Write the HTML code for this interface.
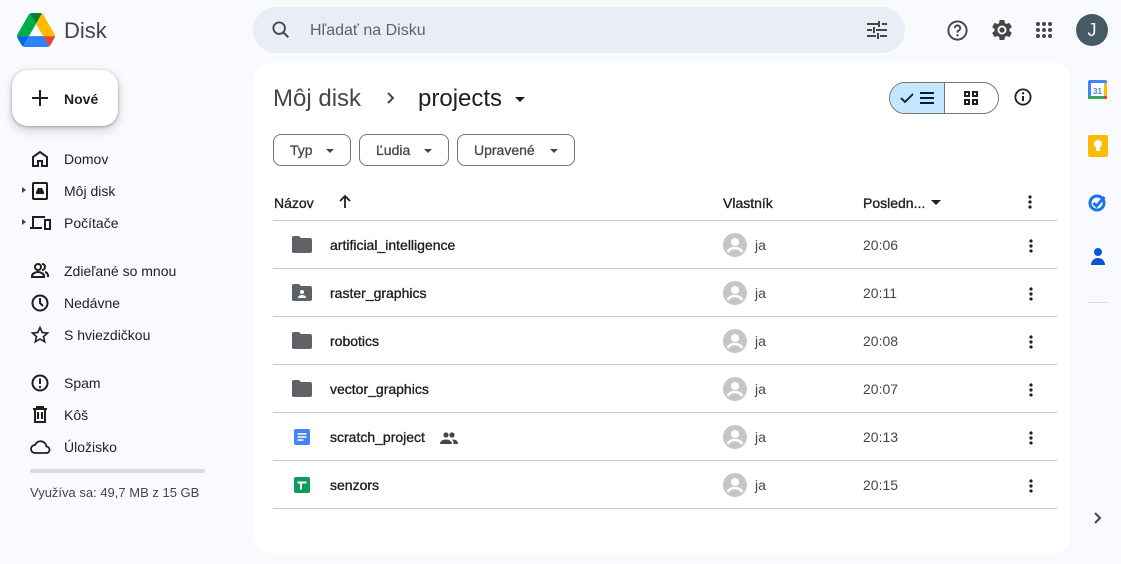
<!DOCTYPE html>
<html><head><meta charset="utf-8"><style>
*{box-sizing:border-box;margin:0;padding:0}
body{width:1121px;height:564px;background:#f8fafd;font-family:"Liberation Sans",sans-serif;color:#1f1f1f;position:relative;overflow:hidden}
.a{position:absolute}
.m{-webkit-text-stroke:0.35px currentColor}
.nav{position:absolute;left:30px;font-size:14px;color:#1f1f1f}
.nav span{position:absolute;left:34px;top:0;white-space:nowrap}
.nav svg{position:absolute;left:0;top:-2px}
.row{position:absolute;left:273px;width:784px;height:48px;border-bottom:1px solid #c7c7c7}
.row .n{position:absolute;left:57px;top:16px;font-size:14px;line-height:16px;color:#1f1f1f;-webkit-text-stroke:0.35px #1f1f1f}
.row .ic{position:absolute;left:18px;top:14px}
.row .av{position:absolute;left:450px;top:12px}
.row .ja{position:absolute;left:482px;top:16px;font-size:14px;line-height:16px;color:#444746}
.row .t{position:absolute;left:590px;top:16px;font-size:14px;line-height:16px;color:#444746}
.row .d{position:absolute;left:756px;top:18px}
.chip{position:absolute;top:134px;height:32px;border:1px solid #747775;border-radius:8px;font-size:14px;line-height:16px;color:#444746;padding:7px 0 0 16px;-webkit-text-stroke:0.3px #444746}
.chip:after{content:"";position:absolute;right:16px;top:14px;border:4px solid transparent;border-top-color:#444746;border-bottom:0}
</style></head><body>
<svg class="a" style="left:17px;top:13px" width="38" height="34" viewBox="0 0 87.3 78"><path d="m6.6 66.85 3.85 6.65c.8 1.4 1.950 2.5 3.3 3.3l13.75-23.8h-27.5c0 1.55.4 3.1 1.2 4.5z" fill="#0066da"/><path d="m43.65 25-13.750-23.8c-1.35.8-2.5 1.9-3.3 3.3l-25.4 44a9.06 9.06 0 0 0 -1.2 4.5h27.5z" fill="#00ac47"/><path d="m73.55 76.8c1.35-.8 2.5-1.9 3.3-3.3l1.6-2.75 7.65-13.25c.8-1.4 1.2-2.95 1.2-4.5h-27.502l5.852 11.5z" fill="#ea4335"/><path d="m43.65 25 13.75-23.8c-1.35-.8-2.9-1.2-4.5-1.2h-18.5c-1.6 0-3.15.45-4.5 1.2z" fill="#00832d"/><path d="m59.8 53h-32.3l-13.75 23.8c1.35.8 2.9 1.2 4.5 1.2h50.8c1.6 0 3.15-.45 4.5-1.2z" fill="#2684fc"/><path d="m73.4 26.5-12.7-22c-.8-1.4-1.95-2.5-3.3-3.3l-13.75 23.8 16.15 28h27.45c0-1.55-.4-3.1-1.2-4.5z" fill="#ffba00"/></svg>
<div class="a" style="left:64px;top:18px;font-size:22px;color:#444746">Disk</div>
<div class="a" style="left:253px;top:7px;width:652px;height:46px;background:#e9eef6;border-radius:24px"></div>
<svg class="a" style="left:270px;top:19px" width="22" height="22" viewBox="0 0 24 24"><circle cx="10" cy="10" r="6.3" fill="none" stroke="#444746" stroke-width="2"/><path d="M14.5 14.5 20 20" stroke="#444746" stroke-width="2.2"/></svg>
<div class="a" style="left:310px;top:22px;font-size:16px;color:#5f6368">Hľadať na Disku</div>
<svg class="a" style="left:866px;top:20px" width="22" height="20" viewBox="0 0 22 20"><path d="M1 4h11M16 4h5M1 10h5M10 10h11M1 16h9M14 16h7M13 1v6M8 7v6M12 13v6" stroke="#444746" stroke-width="2" fill="none"/></svg>
<svg class="a" style="left:946px;top:19px" width="23" height="23" viewBox="0 0 24 24"><circle cx="12" cy="12" r="9.5" fill="none" stroke="#444746" stroke-width="2"/><path d="M9.2 9.5a2.8 2.8 0 1 1 4 2.5c-1 .5-1.2 1.2-1.2 2.2" fill="none" stroke="#444746" stroke-width="2"/><circle cx="12" cy="17" r="1.2" fill="#444746"/></svg>
<svg class="a" style="left:990px;top:18px" width="24" height="24" viewBox="0 0 24 24"><path fill="#444746" d="M19.43 12.98c.04-.32.07-.64.07-.98s-.03-.66-.07-.98l2.11-1.65c.19-.15.24-.42.12-.64l-2-3.46c-.12-.22-.39-.3-.61-.22l-2.49 1c-.52-.4-1.08-.73-1.690-.98l-.38-2.65A.49.49 0 0 0 14 2h-4c-.25 0-.46.18-.49.42l-.38 2.65c-.61.25-1.17.59-1.69.98l-2.49-1c-.23-.09-.49 0-.61.22l-2 3.46c-.13.22-.07.49.12.64l2.11 1.65c-.04.32-.07.65-.07.98s.03.66.07.98l-2.11 1.65c-.19.15-.24.42-.12.64l2 3.46c.12.22.39.3.61.22l2.49-1c.52.4 1.08.73 1.69.98l.38 2.65c.03.24.24.42.49.42h4c.25 0 .46-.18.49-.42l.38-2.65c.61-.25 1.17-.59 1.69-.98l2.49 1c.23.09.49 0 .61-.22l2-3.46c.12-.22.07-.49-.12-.64l-2.11-1.65zM12 16.5a4.5 4.5 0 1 1 0-9 4.5 4.5 0 0 1 0 9z"/><circle cx="12" cy="12" r="2.6" fill="#444746"/></svg>
<svg class="a" style="left:1035px;top:21px" width="18" height="18" viewBox="0 0 18 18" fill="#444746"><circle cx="3" cy="3" r="2"/><circle cx="9" cy="3" r="2"/><circle cx="15" cy="3" r="2"/><circle cx="3" cy="9" r="2"/><circle cx="9" cy="9" r="2"/><circle cx="15" cy="9" r="2"/><circle cx="3" cy="15" r="2"/><circle cx="9" cy="15" r="2"/><circle cx="15" cy="15" r="2"/></svg>
<div class="a" style="left:1076px;top:14px;width:32px;height:32px;border-radius:50%;background:#455a64;color:#fff;font-size:18px;text-align:center;line-height:32px">J</div>
<div class="a" style="left:12px;top:70px;width:106px;height:56px;background:#fff;border-radius:16px;box-shadow:0 1px 3px rgba(0,0,0,.3),0 4px 8px 3px rgba(0,0,0,.1)"></div>
<svg class="a" style="left:31px;top:89px" width="18" height="18" viewBox="0 0 18 18"><path d="M9 1v16M1 9h16" stroke="#1f1f1f" stroke-width="2"/></svg>
<div class="a" style="left:64px;top:91px;font-size:14px;font-weight:bold">Nové</div>
<div class="nav" style="top:151px"><svg width="20" height="20" viewBox="0 0 20 20"><path d="M3 17V8l7-5 7 5v9h-5v-5H8v5z" fill="none" stroke="#1f1f1f" stroke-width="2"/></svg><span>Domov</span></div>
<div class="a" style="left:22px;top:187px;border:3px solid transparent;border-left:4px solid #444;border-right:0"></div>
<div class="nav" style="top:183px"><svg width="20" height="20" viewBox="0 0 20 20"><rect x="3" y="2" width="14" height="16" rx="1" fill="none" stroke="#1f1f1f" stroke-width="2"/><path d="M6 13h8v-2l-2-4h-4l-2 4z" fill="#1f1f1f"/></svg><span>Môj disk</span></div>
<div class="a" style="left:22px;top:219px;border:3px solid transparent;border-left:4px solid #444;border-right:0"></div>
<div class="nav" style="top:215px"><svg width="22" height="20" viewBox="0 0 22 20"><path d="M3 14V4h12M0 15h12" fill="none" stroke="#1f1f1f" stroke-width="2"/><rect x="15" y="7" width="5" height="9" fill="none" stroke="#1f1f1f" stroke-width="2"/></svg><span>Počítače</span></div>
<div class="nav" style="top:263px"><svg width="20" height="20" viewBox="0 0 20 20"><circle cx="8" cy="6" r="3" fill="none" stroke="#1f1f1f" stroke-width="2"/><path d="M2 16v-1c0-2 3-4 6-4s6 2 6 4v1z" fill="none" stroke="#1f1f1f" stroke-width="2"/><path d="M12 3a3 3 0 0 1 0 6M15 11c2 .5 3 2 3 4v1" fill="none" stroke="#1f1f1f" stroke-width="2"/></svg><span>Zdieľané so mnou</span></div>
<div class="nav" style="top:295px"><svg width="20" height="20" viewBox="0 0 20 20"><circle cx="10" cy="10" r="7.5" fill="none" stroke="#1f1f1f" stroke-width="2"/><path d="M10 5v5l3 3" fill="none" stroke="#1f1f1f" stroke-width="2"/></svg><span>Nedávne</span></div>
<div class="nav" style="top:327px"><svg width="20" height="20" viewBox="0 0 20 20"><path d="M10 2.5l2.2 5 5.3.5-4 3.6 1.2 5.2L10 14l-4.7 2.8 1.2-5.2-4-3.6 5.3-.5z" fill="none" stroke="#1f1f1f" stroke-width="1.6"/></svg><span>S hviezdičkou</span></div>
<div class="nav" style="top:375px"><svg width="20" height="20" viewBox="0 0 20 20"><circle cx="10" cy="10" r="7.5" fill="none" stroke="#1f1f1f" stroke-width="2"/><path d="M10 5.5v5.5" stroke="#1f1f1f" stroke-width="2"/><circle cx="10" cy="14" r="1.2" fill="#1f1f1f"/></svg><span>Spam</span></div>
<div class="nav" style="top:407px"><svg width="20" height="20" viewBox="0 0 20 20"><path d="M3 4h14M5 4v13h10V4M8 7v7M12 7v7M7 4V2h6v2" fill="none" stroke="#1f1f1f" stroke-width="2"/></svg><span>Kôš</span></div>
<div class="nav" style="top:439px"><svg width="22" height="20" viewBox="0 0 22 20"><path d="M5 16a4 4 0 0 1 0-8 6 6 0 0 1 11.5 1.5A3.3 3.3 0 0 1 17 16z" fill="none" stroke="#1f1f1f" stroke-width="1.8"/></svg><span>Úložisko</span></div>
<div class="a" style="left:30px;top:469px;width:175px;height:4px;background:#dadce0;border-radius:2px"></div>
<div class="a" style="left:30px;top:485px;font-size:13px;color:#444746">Využíva sa: 49,7 MB z 15 GB</div>
<div class="a" style="left:253px;top:63px;width:817px;height:490px;background:#fff;border-radius:16px"></div>
<div class="a" style="left:273px;top:85px;font-size:24px;color:#444746">Môj disk</div>
<svg class="a" style="left:383px;top:90px" width="16" height="16" viewBox="0 0 16 16"><path d="M5 3l5 5-5 5" fill="none" stroke="#444746" stroke-width="2"/></svg>
<div class="a" style="left:418px;top:85px;font-size:24px;color:#1f1f1f">projects</div>
<div class="a" style="left:515px;top:97px;border:5px solid transparent;border-top-color:#1f1f1f;border-bottom:0"></div>
<div class="a" style="left:889px;top:82px;width:110px;height:32px;border:1px solid #747775;border-radius:16px;overflow:hidden"><div style="position:absolute;left:0;top:0;width:55px;height:32px;background:#c2e7ff;border-right:1px solid #747775"></div></div>
<svg class="a" style="left:899px;top:90px" width="38" height="16" viewBox="0 0 38 16"><path d="M2 8l4 4 8-8" fill="none" stroke="#001d35" stroke-width="1.8"/><path d="M21 3h14M21 8h14M21 13h14" stroke="#001d35" stroke-width="2"/></svg>
<svg class="a" style="left:963px;top:90px" width="16" height="16" viewBox="0 0 16 16" fill="none" stroke="#1f1f1f" stroke-width="2"><rect x="2" y="2" width="4" height="4"/><rect x="10" y="2" width="4" height="4"/><rect x="2" y="10" width="4" height="4"/><rect x="10" y="10" width="4" height="4"/></svg>
<svg class="a" style="left:1013px;top:87px" width="20" height="20" viewBox="0 0 20 20"><circle cx="10" cy="10" r="7.6" fill="none" stroke="#1f1f1f" stroke-width="1.8"/><path d="M10 9v5" stroke="#1f1f1f" stroke-width="2"/><circle cx="10" cy="6.3" r="1.2" fill="#1f1f1f"/></svg>
<div class="chip" style="left:273px;width:78px">Typ</div>
<div class="chip" style="left:359px;width:90px">Ľudia</div>
<div class="chip" style="left:457px;width:118px">Upravené</div>
<div class="a m" style="left:274px;top:195px;font-size:14px">Názov</div>
<svg class="a" style="left:337px;top:194px" width="16" height="16" viewBox="0 0 16 16"><path d="M8 14V2M3 7l5-5 5 5" fill="none" stroke="#1f1f1f" stroke-width="1.8"/></svg>
<div class="a m" style="left:723px;top:195px;font-size:14px">Vlastník</div>
<div class="a m" style="left:863px;top:195px;font-size:14px">Posledn...</div>
<div class="a" style="left:931px;top:200px;border:5px solid transparent;border-top-color:#1f1f1f;border-bottom:0"></div>
<svg class="a" style="left:1028px;top:195px" width="4" height="14" viewBox="0 0 4 14" fill="#1f1f1f"><circle cx="2" cy="2" r="1.6"/><circle cx="2" cy="7" r="1.6"/><circle cx="2" cy="12" r="1.6"/></svg>
<div class="a" style="left:273px;top:220px;width:784px;height:1px;background:#c7c7c7"></div>
<div class="row" style="top:221px"><svg class="ic" width="22" height="20" viewBox="0 0 22 20"><path d="M1 3a2 2 0 0 1 2-2h5l2 2h9a2 2 0 0 1 2 2v11a2 2 0 0 1-2 2H3a2 2 0 0 1-2-2z" fill="#5f6368"/></svg><div class="n">artificial_intelligence</div><svg class="av" width="24" height="24" viewBox="0 0 24 24"><circle cx="12" cy="12" r="12" fill="#c4c7c5"/><circle cx="12" cy="9" r="4" fill="#fff"/><path d="M4.5 19c2-3 4.5-4 7.5-4s5.5 1 7.5 4" fill="none" stroke="#fff" stroke-width="2.5"/></svg><div class="ja">ja</div><div class="t">20:06</div><svg class="d" width="4" height="14" viewBox="0 0 4 14" fill="#1f1f1f"><circle cx="2" cy="2" r="1.6"/><circle cx="2" cy="7" r="1.6"/><circle cx="2" cy="12" r="1.6"/></svg></div>
<div class="row" style="top:269px"><svg class="ic" width="22" height="20" viewBox="0 0 22 20"><path d="M1 3a2 2 0 0 1 2-2h5l2 2h9a2 2 0 0 1 2 2v11a2 2 0 0 1-2 2H3a2 2 0 0 1-2-2z" fill="#5f6368"/><circle cx="11" cy="9" r="2" fill="#fff"/><path d="M7 15c0-2 2-3 4-3s4 1 4 3z" fill="#fff"/></svg><div class="n">raster_graphics</div><svg class="av" width="24" height="24" viewBox="0 0 24 24"><circle cx="12" cy="12" r="12" fill="#c4c7c5"/><circle cx="12" cy="9" r="4" fill="#fff"/><path d="M4.5 19c2-3 4.5-4 7.5-4s5.5 1 7.5 4" fill="none" stroke="#fff" stroke-width="2.5"/></svg><div class="ja">ja</div><div class="t">20:11</div><svg class="d" width="4" height="14" viewBox="0 0 4 14" fill="#1f1f1f"><circle cx="2" cy="2" r="1.6"/><circle cx="2" cy="7" r="1.6"/><circle cx="2" cy="12" r="1.6"/></svg></div>
<div class="row" style="top:317px"><svg class="ic" width="22" height="20" viewBox="0 0 22 20"><path d="M1 3a2 2 0 0 1 2-2h5l2 2h9a2 2 0 0 1 2 2v11a2 2 0 0 1-2 2H3a2 2 0 0 1-2-2z" fill="#5f6368"/></svg><div class="n">robotics</div><svg class="av" width="24" height="24" viewBox="0 0 24 24"><circle cx="12" cy="12" r="12" fill="#c4c7c5"/><circle cx="12" cy="9" r="4" fill="#fff"/><path d="M4.5 19c2-3 4.5-4 7.5-4s5.5 1 7.5 4" fill="none" stroke="#fff" stroke-width="2.5"/></svg><div class="ja">ja</div><div class="t">20:08</div><svg class="d" width="4" height="14" viewBox="0 0 4 14" fill="#1f1f1f"><circle cx="2" cy="2" r="1.6"/><circle cx="2" cy="7" r="1.6"/><circle cx="2" cy="12" r="1.6"/></svg></div>
<div class="row" style="top:365px"><svg class="ic" width="22" height="20" viewBox="0 0 22 20"><path d="M1 3a2 2 0 0 1 2-2h5l2 2h9a2 2 0 0 1 2 2v11a2 2 0 0 1-2 2H3a2 2 0 0 1-2-2z" fill="#5f6368"/></svg><div class="n">vector_graphics</div><svg class="av" width="24" height="24" viewBox="0 0 24 24"><circle cx="12" cy="12" r="12" fill="#c4c7c5"/><circle cx="12" cy="9" r="4" fill="#fff"/><path d="M4.5 19c2-3 4.5-4 7.5-4s5.5 1 7.5 4" fill="none" stroke="#fff" stroke-width="2.5"/></svg><div class="ja">ja</div><div class="t">20:07</div><svg class="d" width="4" height="14" viewBox="0 0 4 14" fill="#1f1f1f"><circle cx="2" cy="2" r="1.6"/><circle cx="2" cy="7" r="1.6"/><circle cx="2" cy="12" r="1.6"/></svg></div>
<div class="row" style="top:413px"><svg class="ic" style="left:20px;top:15px" width="18" height="18" viewBox="0 0 18 18"><rect x="1" y="1" width="16" height="16" rx="2" fill="#4285f4"/><path d="M4.5 6h9M4.5 9h9M4.5 12h6" stroke="#fff" stroke-width="1.6"/></svg><div class="n">scratch_project</div><svg class="a" style="left:167px;top:19px" width="18" height="12" viewBox="0 0 18 12" fill="#444746"><circle cx="6" cy="3" r="2.6"/><circle cx="12" cy="3" r="2.6"/><path d="M0 12c0-3 3-4.5 6-4.5s6 1.5 6 4.5zM13 7.5c3 0 5 1.5 5 4.5h-4.5c0-2-.5-3.5-1.5-4.5z"/></svg><svg class="av" width="24" height="24" viewBox="0 0 24 24"><circle cx="12" cy="12" r="12" fill="#c4c7c5"/><circle cx="12" cy="9" r="4" fill="#fff"/><path d="M4.5 19c2-3 4.5-4 7.5-4s5.5 1 7.5 4" fill="none" stroke="#fff" stroke-width="2.5"/></svg><div class="ja">ja</div><div class="t">20:13</div><svg class="d" width="4" height="14" viewBox="0 0 4 14" fill="#1f1f1f"><circle cx="2" cy="2" r="1.6"/><circle cx="2" cy="7" r="1.6"/><circle cx="2" cy="12" r="1.6"/></svg></div>
<div class="row" style="top:461px"><svg class="ic" style="left:20px;top:15px" width="18" height="18" viewBox="0 0 18 18"><rect x="1" y="1" width="16" height="16" rx="2" fill="#0f9d58"/><path d="M4.5 6.5h9M8 6.5v7" stroke="#fff" stroke-width="2"/></svg><div class="n">senzors</div><svg class="av" width="24" height="24" viewBox="0 0 24 24"><circle cx="12" cy="12" r="12" fill="#c4c7c5"/><circle cx="12" cy="9" r="4" fill="#fff"/><path d="M4.5 19c2-3 4.5-4 7.5-4s5.5 1 7.5 4" fill="none" stroke="#fff" stroke-width="2.5"/></svg><div class="ja">ja</div><div class="t">20:15</div><svg class="d" width="4" height="14" viewBox="0 0 4 14" fill="#1f1f1f"><circle cx="2" cy="2" r="1.6"/><circle cx="2" cy="7" r="1.6"/><circle cx="2" cy="12" r="1.6"/></svg></div>
<svg class="a" style="left:1088px;top:80px" width="19" height="19" viewBox="0 0 19 19"><rect x="0" y="0" width="19" height="19" rx="2" fill="#4285f4"/><rect x="3" y="3" width="13" height="13" fill="#fff"/><rect x="16" y="3" width="3" height="13" fill="#fbbc04"/><rect x="0" y="16" width="16" height="3" fill="#34a853"/><rect x="16" y="16" width="3" height="3" fill="#ea4335"/><text x="9.5" y="14" font-size="8" text-anchor="middle" fill="#4285f4" font-family="Liberation Sans" font-weight="bold">31</text></svg>
<svg class="a" style="left:1088px;top:135px" width="20" height="22" viewBox="0 0 20 22"><rect x="0" y="0" width="20" height="22" rx="2" fill="#fbbc04"/><circle cx="10" cy="9" r="4" fill="#fff"/><rect x="8" y="13" width="4" height="3" fill="#fff"/></svg>
<svg class="a" style="left:1088px;top:192px" width="20" height="20" viewBox="0 0 20 20"><circle cx="9" cy="11" r="7" fill="none" stroke="#1a73e8" stroke-width="3"/><path d="M5.5 11l3 3 8-9" fill="none" stroke="#1a73e8" stroke-width="3"/></svg>
<svg class="a" style="left:1089px;top:247px" width="18" height="20" viewBox="0 0 18 20" fill="#0b57d0"><circle cx="9" cy="5" r="4"/><path d="M2 18c0-4 3-7 7-7s7 3 7 7z"/></svg>
<div class="a" style="left:1088px;top:302px;width:20px;height:1px;background:#dadce0"></div>
<svg class="a" style="left:1092px;top:511px" width="12" height="14" viewBox="0 0 12 14"><path d="M3 2l5 5-5 5" fill="none" stroke="#444746" stroke-width="2"/></svg>
</body></html>
